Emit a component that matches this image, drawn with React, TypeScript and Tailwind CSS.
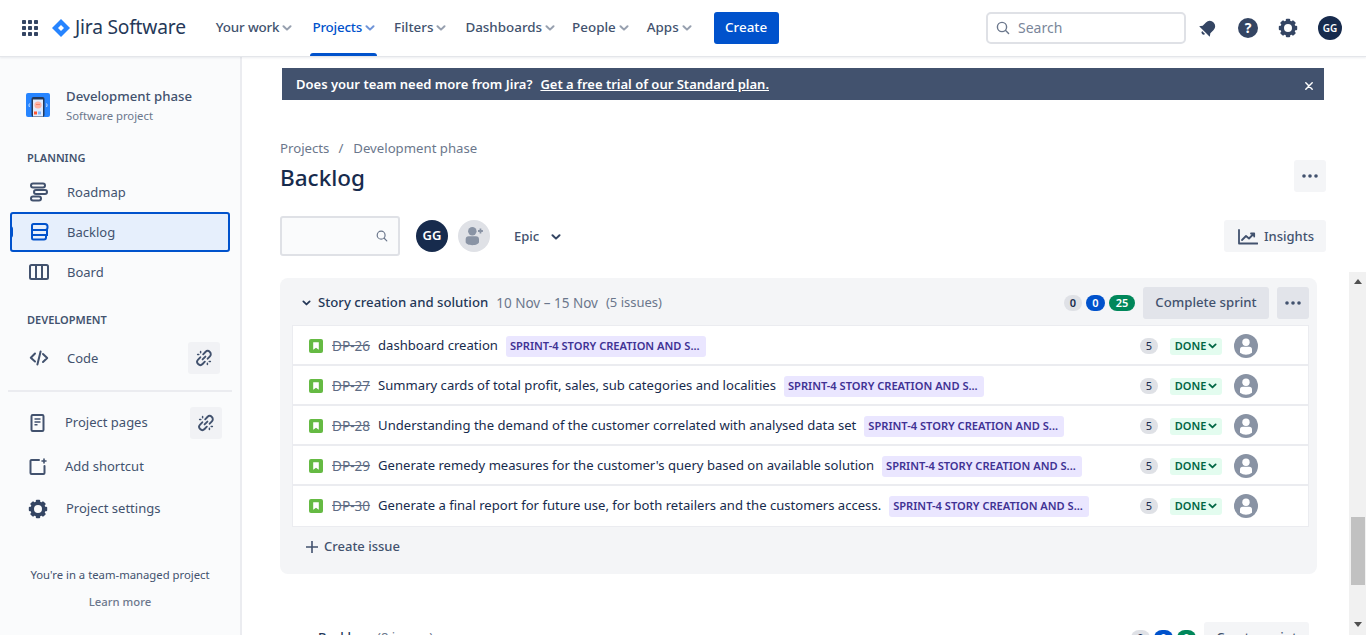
import type { ReactNode } from 'react';

const FONT = "font-['Noto_Sans','Open_Sans',sans-serif]";

interface IssueRow {
  id: string;
  summary: string;
}

const ISSUES: IssueRow[] = [
  { id: 'DP-26', summary: 'dashboard creation' },
  { id: 'DP-27', summary: 'Summary cards of total profit, sales, sub categories and localities' },
  { id: 'DP-28', summary: 'Understanding the demand of the customer correlated with analysed data set' },
  { id: 'DP-29', summary: "Generate remedy measures for the customer's query based on available solution" },
  { id: 'DP-30', summary: 'Generate a final report for future use, for both retailers and the customers access.' },
];

function Chevron({ className = '' }: { className?: string }) {
  return (
    <svg viewBox="0 0 10 6" className={className} fill="none" stroke="currentColor" strokeWidth="2" strokeLinecap="round" strokeLinejoin="round">
      <path d="M1.5 1.2 5 4.6l3.5-3.4" />
    </svg>
  );
}

function NavItem({ label, active = false, textClass = '', className = '' }: { label: string; active?: boolean; textClass?: string; className?: string }) {
  return (
    <div className={`relative flex h-14 items-center gap-[3px] px-[2px] text-[13.4px] font-medium ${active ? 'text-[#0052cc]' : 'text-[#42526e]'} ${className}`}>
      <span className={`mb-[2px] ${textClass}`}>{label}</span>
      <Chevron className={`h-[6px] w-[10px] ${active ? 'text-[#6f94d8]' : 'text-[#97a0af]'}`} />
      {active ? <div className="absolute right-0 bottom-0 left-0 h-[3px] rounded-t-sm bg-[#0052cc]" /> : null}
    </div>
  );
}

function BrokenLink() {
  return (
    <svg viewBox="0 0 18 18" className="h-[18px] w-[18px]" fill="none" stroke="#42526e" strokeWidth="1.9" strokeLinecap="round">
      <path d="M8.2 5.3 10.4 3a3 3 0 0 1 4.5 4.4l-2.2 2.3" />
      <path d="M9.8 12.7 7.6 15a3 3 0 0 1-4.5-4.4l2.2-2.3" />
      <path d="M7.6 10.4l2.8-2.8" />
      <path d="M2.6 5.6h1.2M5.6 2.6v1.2M15.4 12.4h-1.2M12.4 15.4v-1.2" strokeWidth="1.5" />
    </svg>
  );
}

function SideItem({ icon, label, active = false, action = false }: { icon: ReactNode; label: string; active?: boolean; action?: boolean }) {
  return (
    <div
      className={`relative flex h-10 items-center rounded-[3px] text-[13px] text-[#42526e] ${
        active ? 'border-2 border-[#0052cc] bg-[#e6effc]' : ''
      }`}
    >
      <div className={`flex w-[57px] shrink-0 justify-center ${active ? 'pr-[1px]' : ''}`}>{icon}</div>
      <span className={`mt-[2px] ${active ? 'ml-[-2px]' : ''}`}>{label}</span>
      {action ? (
        <div className="absolute top-1 right-[10px] flex h-8 w-8 items-center justify-center rounded-[3px] bg-[#f1f2f5]">
          <BrokenLink />
        </div>
      ) : null}
      {active ? <div className="absolute top-3 left-[-2px] h-[12px] w-[3px] rounded-r-sm bg-[#0052cc]" /> : null}
    </div>
  );
}

function GearIcon({ className = '' }: { className?: string }) {
  return (
    <svg viewBox="0 0 20 20" className={className} fill="none">
      {[0, 45, 90, 135, 180, 225, 270, 315].map((deg) => (
        <rect key={deg} x="7.8" y="0.8" width="4.4" height="4" rx="1" fill="#344563" transform={`rotate(${deg} 10 10)`} />
      ))}
      <circle cx="10" cy="10" r="5.8" fill="none" stroke="#344563" strokeWidth="3.6" />
    </svg>
  );
}

function PersonIcon() {
  return (
    <svg viewBox="0 0 24 24" className="h-6 w-6">
      <circle cx="12" cy="12" r="12" fill="#8993a4" />
      <circle cx="12" cy="8.3" r="3.7" fill="#fff" />
      <path d="M6 15.5a2.8 2.8 0 0 1 2.8-2.8h6.4a2.8 2.8 0 0 1 2.8 2.8v3.2a9.4 9.4 0 0 1-12 0z" fill="#fff" />
    </svg>
  );
}

function DotsIcon() {
  return (
    <svg viewBox="0 0 16 4" className="h-1 w-4" fill="#42526e">
      <circle cx="2" cy="2" r="1.8" />
      <circle cx="8" cy="2" r="1.8" />
      <circle cx="14" cy="2" r="1.8" />
    </svg>
  );
}

function Row({ issue, last }: { issue: IssueRow; last: boolean }) {
  return (
    <div className={`flex h-10 items-center bg-white pl-4 text-[13.08px] ${last ? '' : 'border-b-2 border-[#ebecf0] pt-[2px]'}`}>
      <svg viewBox="0 0 14 14" className="h-[14px] w-[14px] shrink-0">
        <rect width="14" height="14" rx="2" fill="#65ba43" />
        <path d="M4.2 3.2h5.6v7.6L7 8.8l-2.8 2z" fill="#fff" />
      </svg>
      <span className="ml-[9px] text-[13.6px] text-[#5e6c84] line-through">{issue.id}</span>
      <span className="ml-2 whitespace-nowrap text-[#172b4d]">{issue.summary}</span>
      <span className="ml-2 flex h-[21px] w-[200px] shrink-0 items-center rounded-[3px] bg-[#eae6ff] pl-1 text-[11.1px] font-semibold whitespace-nowrap text-[#403294]">
        SPRINT-4 STORY CREATION AND S...
      </span>
      <div className="ml-auto flex items-center">
        <span className="flex h-4 w-[18px] items-center justify-center rounded-full bg-[#dfe1e6] text-[11px] text-[#172b4d]">5</span>
        <span className="ml-3 flex h-[17px] w-[52px] items-center justify-center gap-[2px] rounded-[3px] bg-[#e3fcef] text-[11px] font-semibold text-[#006644]">
          DONE
          <Chevron className="h-[6px] w-[9px]" />
        </span>
        <div className="mr-[50px] ml-3">
          <PersonIcon />
        </div>
      </div>
    </div>
  );
}

export default function App() {
  return (
    <div className={`flex h-[635px] w-[1366px] flex-col overflow-hidden bg-white ${FONT}`}>
      <header className="relative z-10 flex h-[57px] shrink-0 items-center border-b border-[#e4e6ea] bg-white pr-6 pl-[22px] shadow-[0_1px_2px_rgba(9,30,66,0.08)]">
        <svg viewBox="0 0 16 16" className="h-4 w-4" fill="#344563">
          {[0, 6, 12].map((y) =>
            [0, 6, 12].map((x) => <rect key={`${x}-${y}`} x={x} y={y} width="4" height="4" rx="0.8" />),
          )}
        </svg>
        <svg viewBox="0 0 18 18" className="ml-[14px] h-[18px] w-[18px]">
          <path d="M9 0l9 9-9 9-9-9z" fill="#2684ff" />
          <path d="M9 6l3 3-3 3-3-3z" fill="#fff" />
        </svg>
        <span className="mb-[2px] ml-[5px] text-[19.2px] tracking-[-0.2px] text-[#253858]">Jira Software</span>
        <nav className="ml-[28px] flex h-14 items-center gap-[14px]">
          <NavItem label="Your work" textClass="tracking-[-0.15px]" className="mr-[2px]" />
          <NavItem label="Projects" active textClass="tracking-[-0.2px]" className="mr-[1px]" />
          <NavItem label="Filters" className="mr-[1px]" />
          <NavItem label="Dashboards" className="mr-[-1px]" />
          <NavItem label="People" />
          <NavItem label="Apps" />
        </nav>
        <button type="button" className="ml-5 h-8 w-[65px] rounded-[3px] bg-[#0052cc] pb-[2px] text-[13.4px] font-medium text-white">
          Create
        </button>
        <div className="ml-auto flex h-8 w-[200px] items-center rounded-[5px] border-2 border-[#dfe1e6] pl-[8px] text-[14px] text-[#7a869a]">
          <svg viewBox="0 0 14 14" className="h-[14px] w-[14px]" fill="none" stroke="#6b778c" strokeWidth="1.4" strokeLinecap="round">
            <circle cx="6" cy="6" r="4.6" />
            <path d="M9.6 9.6l3 3" />
          </svg>
          <span className="mb-[2px] ml-2">Search</span>
        </div>
        <svg viewBox="0 0 24 24" className="ml-[12px] h-5 w-5" fill="#344563">
          <g transform="rotate(45 12 12)">
            <path d="M12 2.5a6.5 6.5 0 0 0-6.5 6.5v5.5L3 18h18l-2.5-3.5V9A6.5 6.5 0 0 0 12 2.5z" />
            <path d="M9.5 19.5a2.5 2.5 0 0 0 5 0z" />
          </g>
        </svg>
        <svg viewBox="0 0 20 20" className="ml-[20px] h-5 w-5">
          <circle cx="10" cy="10" r="10" fill="#344563" />
          <text x="10" y="15" textAnchor="middle" fontSize="14" fontWeight="700" fill="#fff" fontFamily="Noto Sans">?</text>
        </svg>
        <GearIcon className="ml-[20px] h-5 w-5" />
        <div className="ml-[20px] flex h-6 w-6 items-center justify-center rounded-full bg-[#172b4d] text-[10px] font-semibold text-white">GG</div>
      </header>

      <div className="flex min-h-0 flex-1">
        <aside className="flex w-[242px] shrink-0 flex-col border-r-2 border-[#ebecf0] bg-[#fafbfc] pr-[10px] pl-[10px]">
          <div className="mt-[32px] flex h-[32px] items-center pl-4">
            <svg viewBox="0 0 24 24" className="h-6 w-6 shrink-0 rounded-[2px]">
              <rect width="24" height="24" fill="#2684ff" />
              <rect x="5.5" y="4" width="13" height="20" rx="2" fill="#253858" />
              <rect x="7" y="6.5" width="10" height="17" fill="#deebff" />
              <circle cx="12" cy="12" r="3.6" fill="#ffb3a3" />
              <path d="M10.5 11.5h1M12.5 11.5h1" stroke="#de350b" strokeWidth="0.7" />
              <rect x="8" y="18.5" width="3" height="3" fill="#ff5630" />
              <rect x="12" y="18.5" width="3" height="3" fill="#85b8ff" />
              <path d="M3.6 10.5c-.8 1-.8 2.5 0 3.5M20.4 10.5c.8 1 .8 2.5 0 3.5" stroke="#fff" strokeWidth="0.8" fill="none" />
            </svg>
            <div className="ml-4">
              <div className="text-[13.2px] leading-[18px] font-medium text-[#42526e]">Development phase</div>
              <div className="mt-[3px] text-[11.3px] leading-[16px] text-[#6b778c]">Software project</div>
            </div>
          </div>
          <div className="mt-[29px] pl-[17px] text-[11px] leading-4 font-semibold text-[#42526e]">PLANNING</div>
          <div className="mt-[6px] flex flex-col">
            <SideItem
              label="Roadmap"
              icon={
                <svg viewBox="0 0 20 20" className="h-5 w-5" fill="none" stroke="#42526e" strokeWidth="2">
                  <rect x="2" y="1.5" width="14" height="4" rx="2" />
                  <rect x="5" y="8" width="13" height="4" rx="2" />
                  <rect x="2" y="14.5" width="10" height="4" rx="2" />
                </svg>
              }
            />
            <SideItem
              active
              label="Backlog"
              icon={
                <svg viewBox="0 0 20 20" className="h-5 w-5" fill="none" stroke="#0052cc" strokeWidth="2">
                  <path d="M2 3.5A1.5 1.5 0 0 1 3.5 2h11.5a2.5 2.5 0 0 1 2.5 2.5v1A2.5 2.5 0 0 1 15 8H2zM2 8h15v5H2zM2 13h14v2.5a2 2 0 0 1-2 2H3.5A1.5 1.5 0 0 1 2 16z" />
                </svg>
              }
            />
            <SideItem
              label="Board"
              icon={
                <svg viewBox="0 0 20 20" className="h-5 w-5" fill="none" stroke="#42526e" strokeWidth="2">
                  <rect x="1" y="3" width="18" height="14" rx="1.5" />
                  <path d="M7 3v14M13 3v14" />
                </svg>
              }
            />
          </div>
          <div className="mt-[20px] pl-[17px] text-[11px] leading-4 font-semibold text-[#42526e]">DEVELOPMENT</div>
          <div className="mt-[10px]">
            <SideItem
              action
              label="Code"
              icon={
                <svg viewBox="0 0 20 20" className="h-5 w-5" fill="none" stroke="#42526e" strokeWidth="2" strokeLinecap="round" strokeLinejoin="round">
                  <path d="M6 5.5 1.8 9.8 6 13.5M14 6l4.2 4L14 14M11.6 3.5 8.4 16.5" />
                </svg>
              }
            />
          </div>
          <div className="mt-[12px] ml-[-2px] h-[2px] w-[224px] bg-[#ebecf0]" />
          <div className="mt-[11px]">
            <div className="relative flex h-10 items-center text-[13px] text-[#42526e]">
              <div className="flex w-[55px] shrink-0 justify-center">
                <svg viewBox="0 0 16 18" className="h-[18px] w-4" fill="none" stroke="#42526e" strokeWidth="2">
                  <rect x="1.5" y="1" width="12" height="16" rx="1.2" />
                  <path d="M4.5 5h6M4.5 8h6M4.5 10.8h3" strokeWidth="1.6" />
                </svg>
              </div>
              <span>Project pages</span>
              <div className="absolute top-1 right-2 flex h-8 w-8 items-center justify-center rounded-[3px] bg-[#f1f2f5]">
                <BrokenLink />
              </div>
            </div>
            <div className="mt-[4px] flex h-10 items-center text-[13px] text-[#42526e]">
              <div className="flex w-[55px] shrink-0 justify-center">
                <svg viewBox="0 0 18 18" className="h-[18px] w-[18px]" fill="none" stroke="#42526e" strokeWidth="2" strokeLinecap="round">
                  <path d="M10 2H2.5a1 1 0 0 0-1 1v12a1 1 0 0 0 1 1h12a1 1 0 0 0 1-1V8" />
                  <path d="M15 1v4M13 3h4" strokeWidth="1.6" />
                </svg>
              </div>
              <span>Add shortcut</span>
            </div>
            <div className="mt-[2px] flex h-10 items-center text-[13px] text-[#42526e]">
              <div className="flex w-[55px] shrink-0 justify-center">
                <GearIcon className="h-5 w-5" />
              </div>
              <span className="ml-[1px]">Project settings</span>
            </div>
          </div>
          <div className="mt-[38px] text-center text-[11.3px] leading-4 text-[#42526e]">You're in a team-managed project</div>
          <div className="mt-[11px] text-center text-[11.3px] leading-4 font-medium text-[#6b778c]">Learn more</div>
        </aside>

        <main className="relative min-w-0 flex-1">
          <div className="mt-[11px] ml-[40px] flex h-8 w-[1042px] items-center bg-[#42526e] pr-[11px] pl-[14px] text-[13px] font-semibold text-white">
            <span className="mt-[1px]">Does your team need more from Jira?</span>
            <span className="mt-[1px] ml-2 underline">Get a free trial of our Standard plan.</span>
            <svg viewBox="0 0 10 10" className="mt-[3px] ml-auto h-2 w-2" stroke="#fff" strokeWidth="1.8" strokeLinecap="round">
              <path d="M1 1l8 8M9 1l-8 8" />
            </svg>
          </div>

          <div className="mt-[39px] ml-[38px] text-[13.2px] leading-[18px] text-[#6b778c]">
            Projects<span className="mr-[10px] ml-[9px]">/</span>Development phase
          </div>
          <div className="mt-[3px] mr-[40px] ml-[38px] flex h-8 items-center justify-between">
            <h1 className="mt-1 text-[22.5px] font-medium text-[#172b4d]">Backlog</h1>
            <div className="flex h-8 w-8 items-center justify-center rounded-[3px] bg-[#f4f5f7]">
              <DotsIcon />
            </div>
          </div>

          <div className="mt-[24px] mr-[40px] ml-[38px] flex h-10 items-center">
            <div className="flex h-10 w-[120px] items-center justify-end rounded-[3px] border-2 border-[#dfe1e6] bg-[#fafbfc] pr-[10px]">
              <svg viewBox="0 0 14 14" className="h-3 w-3" fill="none" stroke="#6b778c" strokeWidth="1.4" strokeLinecap="round">
                <circle cx="6" cy="6" r="4.6" />
                <path d="M9.6 9.6l3 3" />
              </svg>
            </div>
            <div className="ml-[16px] flex h-8 w-8 items-center justify-center rounded-full bg-[#172b4d] text-[13px] font-semibold text-white">GG</div>
            <div className="ml-[10px] flex h-8 w-8 items-center justify-center rounded-full bg-[#dfe1e6]">
              <svg viewBox="0 0 18 18" className="h-5 w-5" fill="#8993a4">
                <circle cx="7.5" cy="4.8" r="3.8" />
                <path d="M1.5 12a2.8 2.8 0 0 1 2.8-2.8h6.4a2.8 2.8 0 0 1 2.8 2.8v2.5c0 1.8-2.8 2.8-6 2.8s-6-1-6-2.8z" />
                <path d="M12.6 4.5h4.4M14.8 2.3v4.4" stroke="#8993a4" strokeWidth="1.6" />
              </svg>
            </div>
            <span className="mt-[2px] ml-[24px] text-[13px] font-medium text-[#42526e]">Epic</span>
            <Chevron className="mt-[2px] ml-3 h-[6px] w-[10px] text-[#344563]" />
            <div className="ml-auto flex h-8 w-[102px] items-center justify-center rounded-[3px] bg-[#f4f5f7] pt-[2px] pl-[2px] text-[13px] font-medium text-[#42526e]">
              <svg viewBox="0 0 20 16" className="mr-[6px] h-4 w-5" fill="none" stroke="#42526e" strokeWidth="1.8" strokeLinecap="round" strokeLinejoin="round">
                <path d="M1 1v13.5h18.5" />
                <path d="M4 11l4-4 3 2.5 5-5M13 4.5h3.2v3" />
              </svg>
              Insights
            </div>
          </div>

          <section className="mt-[22px] ml-[38px] w-[1037px] rounded-[8px] bg-[#f4f5f7] pr-2 pl-3">
            <div className="flex h-[47px] items-center pt-[3px]">
              <Chevron className="ml-[10px] h-[6px] w-[9px] text-[#253858]" />
              <span className="ml-[7px] text-[13.2px] font-medium text-[#253858]">Story creation and solution</span>
              <span className="ml-2 text-[13.5px] text-[#6b778c]">10 Nov – 15 Nov</span>
              <span className="ml-2 text-[13px] text-[#6b778c]">(5 issues)</span>
              <div className="ml-auto flex items-center">
                <span className="flex h-4 w-[18px] items-center justify-center rounded-full bg-[#dfe1e6] text-[11px] font-semibold text-[#172b4d]">0</span>
                <span className="ml-1 flex h-4 w-[19px] items-center justify-center rounded-full bg-[#0052cc] text-[11px] font-semibold text-white">0</span>
                <span className="ml-1 flex h-4 w-[26px] items-center justify-center rounded-full bg-[#00875a] text-[11px] font-semibold text-white">25</span>
                <div className="ml-2 flex h-8 w-[126px] items-center justify-center rounded-[3px] bg-[#e2e4ea] text-[13.2px] font-medium text-[#42526e]">Complete sprint</div>
                <div className="ml-2 flex h-8 w-8 items-center justify-center rounded-[3px] bg-[#e2e4ea]">
                  <DotsIcon />
                </div>
              </div>
            </div>
            <div className="border border-[#ebecf0]">
              {ISSUES.map((issue, i) => (
                <Row key={issue.id} issue={issue} last={i === ISSUES.length - 1} />
              ))}
            </div>
            <div className="flex h-[47px] items-center pt-[2px] pb-[10px] pl-[14px] text-[13px] font-medium text-[#42526e]">
              <svg viewBox="0 0 12 12" className="h-3 w-3" stroke="#42526e" strokeWidth="1.6">
                <path d="M6 0v12M0 6h12" />
              </svg>
              <span className="ml-[6px]">Create issue</span>
            </div>
          </section>

          <div className="mt-[48px] ml-[38px] flex h-8 w-[1029px] items-center">
            <span className="ml-[38px] text-[13px] font-medium text-[#253858]">Backlog</span>
            <span className="ml-[10px] text-[13px] text-[#6b778c]">(8 issues)</span>
            <div className="ml-auto flex items-center">
              <span className="flex h-4 w-[19px] items-center justify-center rounded-full bg-[#dfe1e6] text-[11px] font-semibold text-[#172b4d]">0</span>
              <span className="ml-1 flex h-4 w-[19px] items-center justify-center rounded-full bg-[#0052cc] text-[11px] font-semibold text-white">0</span>
              <span className="ml-1 flex h-4 w-[19px] items-center justify-center rounded-full bg-[#00875a] text-[11px] font-semibold text-white">0</span>
              <div className="ml-2 flex h-8 w-[105px] items-center justify-center rounded-[3px] bg-[#f4f5f7] text-[13px] font-medium text-[#42526e]">Create sprint</div>
            </div>
          </div>

          <div className="absolute top-[215px] right-0 bottom-0 flex w-[17px] flex-col items-center bg-[#f1f1f1]">
            <svg viewBox="0 0 8 5" className="mt-[7px] h-[5px] w-2" fill="#505050">
              <path d="M4 0l4 5H0z" />
            </svg>
            <div className="mt-[233px] h-[68px] w-[14px] bg-[#c1c1c1]" />
            <svg viewBox="0 0 8 5" className="mt-[37px] h-[5px] w-2" fill="#505050">
              <path d="M0 0h8L4 5z" />
            </svg>
          </div>
        </main>
      </div>
    </div>
  );
}
